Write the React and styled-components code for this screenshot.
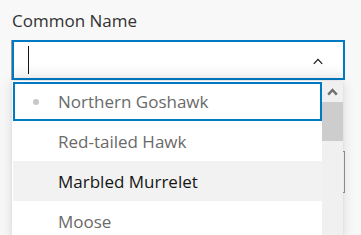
import React from "react";
import styled, { createGlobalStyle } from "styled-components";

const Global = createGlobalStyle`
  html, body { margin: 0; padding: 0; }
  body {
    background: #f8f8f8;
    font-family: "Open Sans", Lato, "Noto Sans", sans-serif;
    width: 361px;
    height: 235px;
    overflow: hidden;
  }
`;

const Page = styled.div`
  position: relative;
  padding: 10px 16px 0 12px;
  display: flex;
  flex-direction: column;
`;

const Label = styled.label`
  font-size: 17px;
  line-height: 22px;
  color: #323232;
  margin-bottom: 8px;
`;

const Field = styled.div`
  position: relative;
`;

const Input = styled.div`
  box-sizing: border-box;
  height: 40px;
  width: 333px;
  border: 2px solid #007ac2;
  background: linear-gradient(#ffffff 55%, #f6f6f6);
  box-shadow: -1px 0 0 #9a9a9a;
  display: flex;
  align-items: center;
  padding: 0 20px 0 14px;
`;

const Caret = styled.span`
  width: 1px;
  height: 28px;
  background: #151515;
`;

const Chevron = styled.svg`
  margin-left: auto;
  margin-top: 2px;
`;

const Behind = styled.div`
  box-sizing: border-box;
  margin-top: 71px;
  height: 42px;
  width: 333px;
  border: 1px solid #959595;
  background: #ffffff;
`;

const Dropdown = styled.div`
  position: absolute;
  top: 41px;
  left: 0;
  width: 331px;
  height: 160px;
  display: flex;
  background: #ffffff;
  box-shadow: 0 0 12px rgba(0, 0, 0, 0.13), 0 0 3px rgba(0, 0, 0, 0.06);
  z-index: 2;
`;

const List = styled.ul`
  list-style: none;
  margin: 0;
  padding: 0 0 0 1px;
  flex: 1;
`;

const Item = styled.li`
  box-sizing: border-box;
  display: flex;
  align-items: center;
  padding-left: ${(p) => (p.$focused ? "20px" : "45px")};
  font-size: 17px;
  color: ${(p) => (p.$active ? "#151515" : "#6a6a6a")};
  background: ${(p) => (p.$active ? "#f2f2f2" : "#ffffff")};
  box-shadow: ${(p) => (p.$focused ? "inset 0 0 0 2px #007ac2" : "none")};
  margin-top: ${(p) => (p.$focused ? "1px" : "0")};
  height: ${(p) => (p.$focused ? "39px" : "40px")};
`;

const Dot = styled.span`
  width: 6px;
  height: 6px;
  border-radius: 50%;
  background: #c8c8c8;
  margin-right: 19px;
`;

const Scrollbar = styled.div`
  width: 21px;
  background: #f0f0f0;
  display: flex;
  flex-direction: column;
`;

const ScrollButton = styled.div`
  height: 21px;
  display: flex;
  align-items: center;
  justify-content: center;
`;

const Thumb = styled.div`
  height: 39px;
  background: #cdcdcd;
`;

const items = [
  { name: "Northern Goshawk", focused: true },
  { name: "Red-tailed Hawk" },
  { name: "Marbled Murrelet", active: true },
  { name: "Moose" },
];

export default function App() {
  return (
    <>
      <Global />
      <Page>
        <Label>Common Name</Label>
        <Field>
          <Input>
            <Caret />
            <Chevron width="10" height="7" viewBox="0 0 10 7">
              <polyline
                points="0.8,5.8 5,1.4 9.2,5.8"
                fill="none"
                stroke="#151515"
                strokeWidth="1.2"
              />
            </Chevron>
          </Input>
          <Dropdown>
            <List>
              {items.map((it) => (
                <Item key={it.name} $focused={it.focused} $active={it.active}>
                  {it.focused && <Dot />}
                  {it.name}
                </Item>
              ))}
            </List>
            <Scrollbar>
              <ScrollButton>
                <svg width="11" height="8" viewBox="0 0 11 8">
                  <polyline
                    points="1.2,6.6 5.5,2 9.8,6.6"
                    fill="none"
                    stroke="#6e6e6e"
                    strokeWidth="2.4"
                  />
                </svg>
              </ScrollButton>
              <Thumb />
            </Scrollbar>
          </Dropdown>
          <Behind />
        </Field>
      </Page>
    </>
  );
}
